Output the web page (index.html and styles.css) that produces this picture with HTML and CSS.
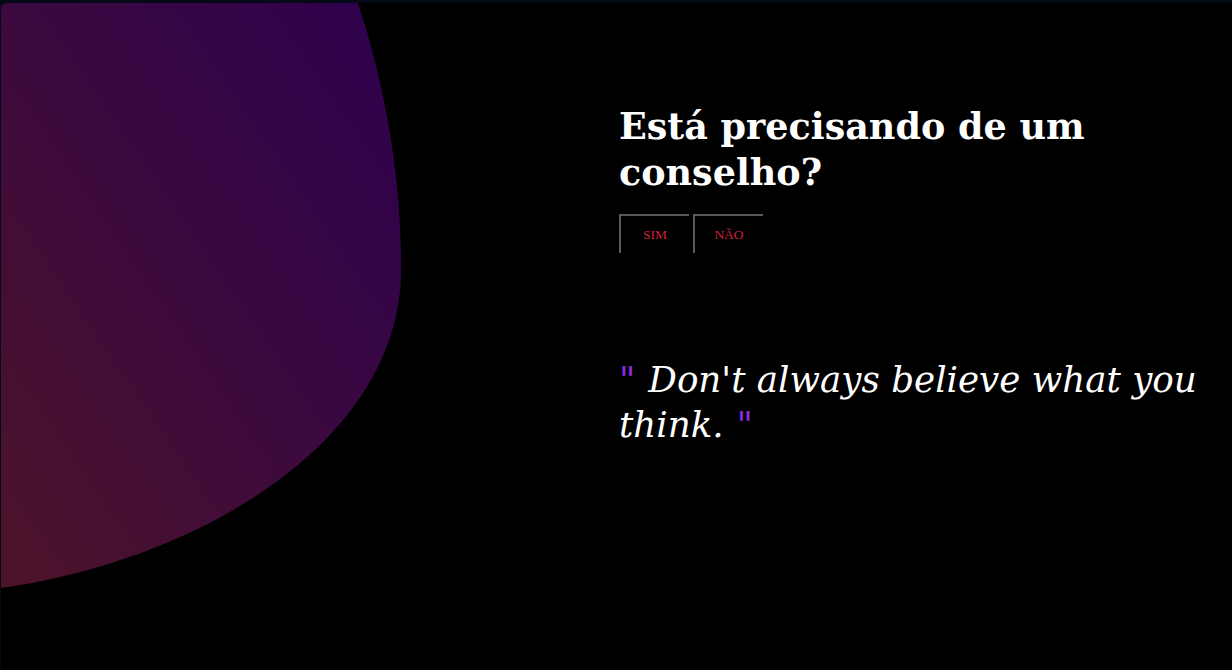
FILE: index.html
```html
<!DOCTYPE html>
<html lang="pt-BR">
<head>
<meta charset="utf-8">
<title>Conselho</title>
<link rel="stylesheet" href="styles.css">
</head>
<body>
<main class="page">
  <div class="art">
    <svg class="blob" viewBox="0 0 615 667" preserveAspectRatio="none" xmlns="http://www.w3.org/2000/svg">
      <defs>
        <linearGradient id="g" x1="0" y1="1" x2="1" y2="0">
          <stop offset="0" stop-color="#4d1428"/>
          <stop offset="0.55" stop-color="#3a0840"/>
          <stop offset="1" stop-color="#2e004e"/>
        </linearGradient>
      </defs>
      <path d="M0,585 L0,5 Q0,0 5,0 L357,0 C385,85 401,180 400,267 C400,437 200,557 0,585 Z" fill="url(#g)"/>
    </svg>
  </div>
  <section class="content">
    <h1 class="title">Está precisando de um conselho?</h1>
    <div class="choices">
      <button class="choice">SIM</button>
      <button class="choice">NÃO</button>
    </div>
    <p class="quote"><span class="mark open">"</span>Don't always believe what you think.<span class="mark close">"</span></p>
  </section>
</main>
</body>
</html>
```

FILE: styles.css
```css
html, body {
  margin: 0;
  padding: 0;
  height: 100%;
}

body {
  background: #040817;
  overflow: hidden;
}

.page {
  margin: 3px 0 0 1px;
  height: 667px;
  background: #000;
  border-top-left-radius: 5px;
  display: grid;
  grid-template-columns: 615px 1fr;
  overflow: hidden;
}

.art {
  height: 100%;
}

.blob {
  display: block;
  width: 615px;
  height: 667px;
}

.content {
  padding: 101px 20px 0 3px;
  color: #fff;
  font-family: "DejaVu Serif", Georgia, serif;
}

.title {
  margin: 0;
  font-size: 36.5px;
  line-height: 46px;
  font-weight: bold;
  max-width: 580px;
}

.choices {
  margin-top: 18px;
  display: flex;
  gap: 4px;
}

.choice {
  width: 70px;
  height: 39px;
  padding: 0;
  background: transparent;
  border-style: solid;
  border-width: 2px 0 0 2px;
  border-color: #5a5a5a;
  color: #d0213a;
  font-family: "Liberation Serif", Georgia, serif;
  font-size: 13.5px;
}

.quote {
  margin: 104px 0 0 0;
  font-size: 35.7px;
  line-height: 45px;
  font-style: italic;
  max-width: 600px;
}

.mark {
  display: inline-block;
  color: #8a2be2;
}

.mark.open {
  margin-right: 0.36em;
}

.mark.close {
  margin-left: 0.36em;
}
```
